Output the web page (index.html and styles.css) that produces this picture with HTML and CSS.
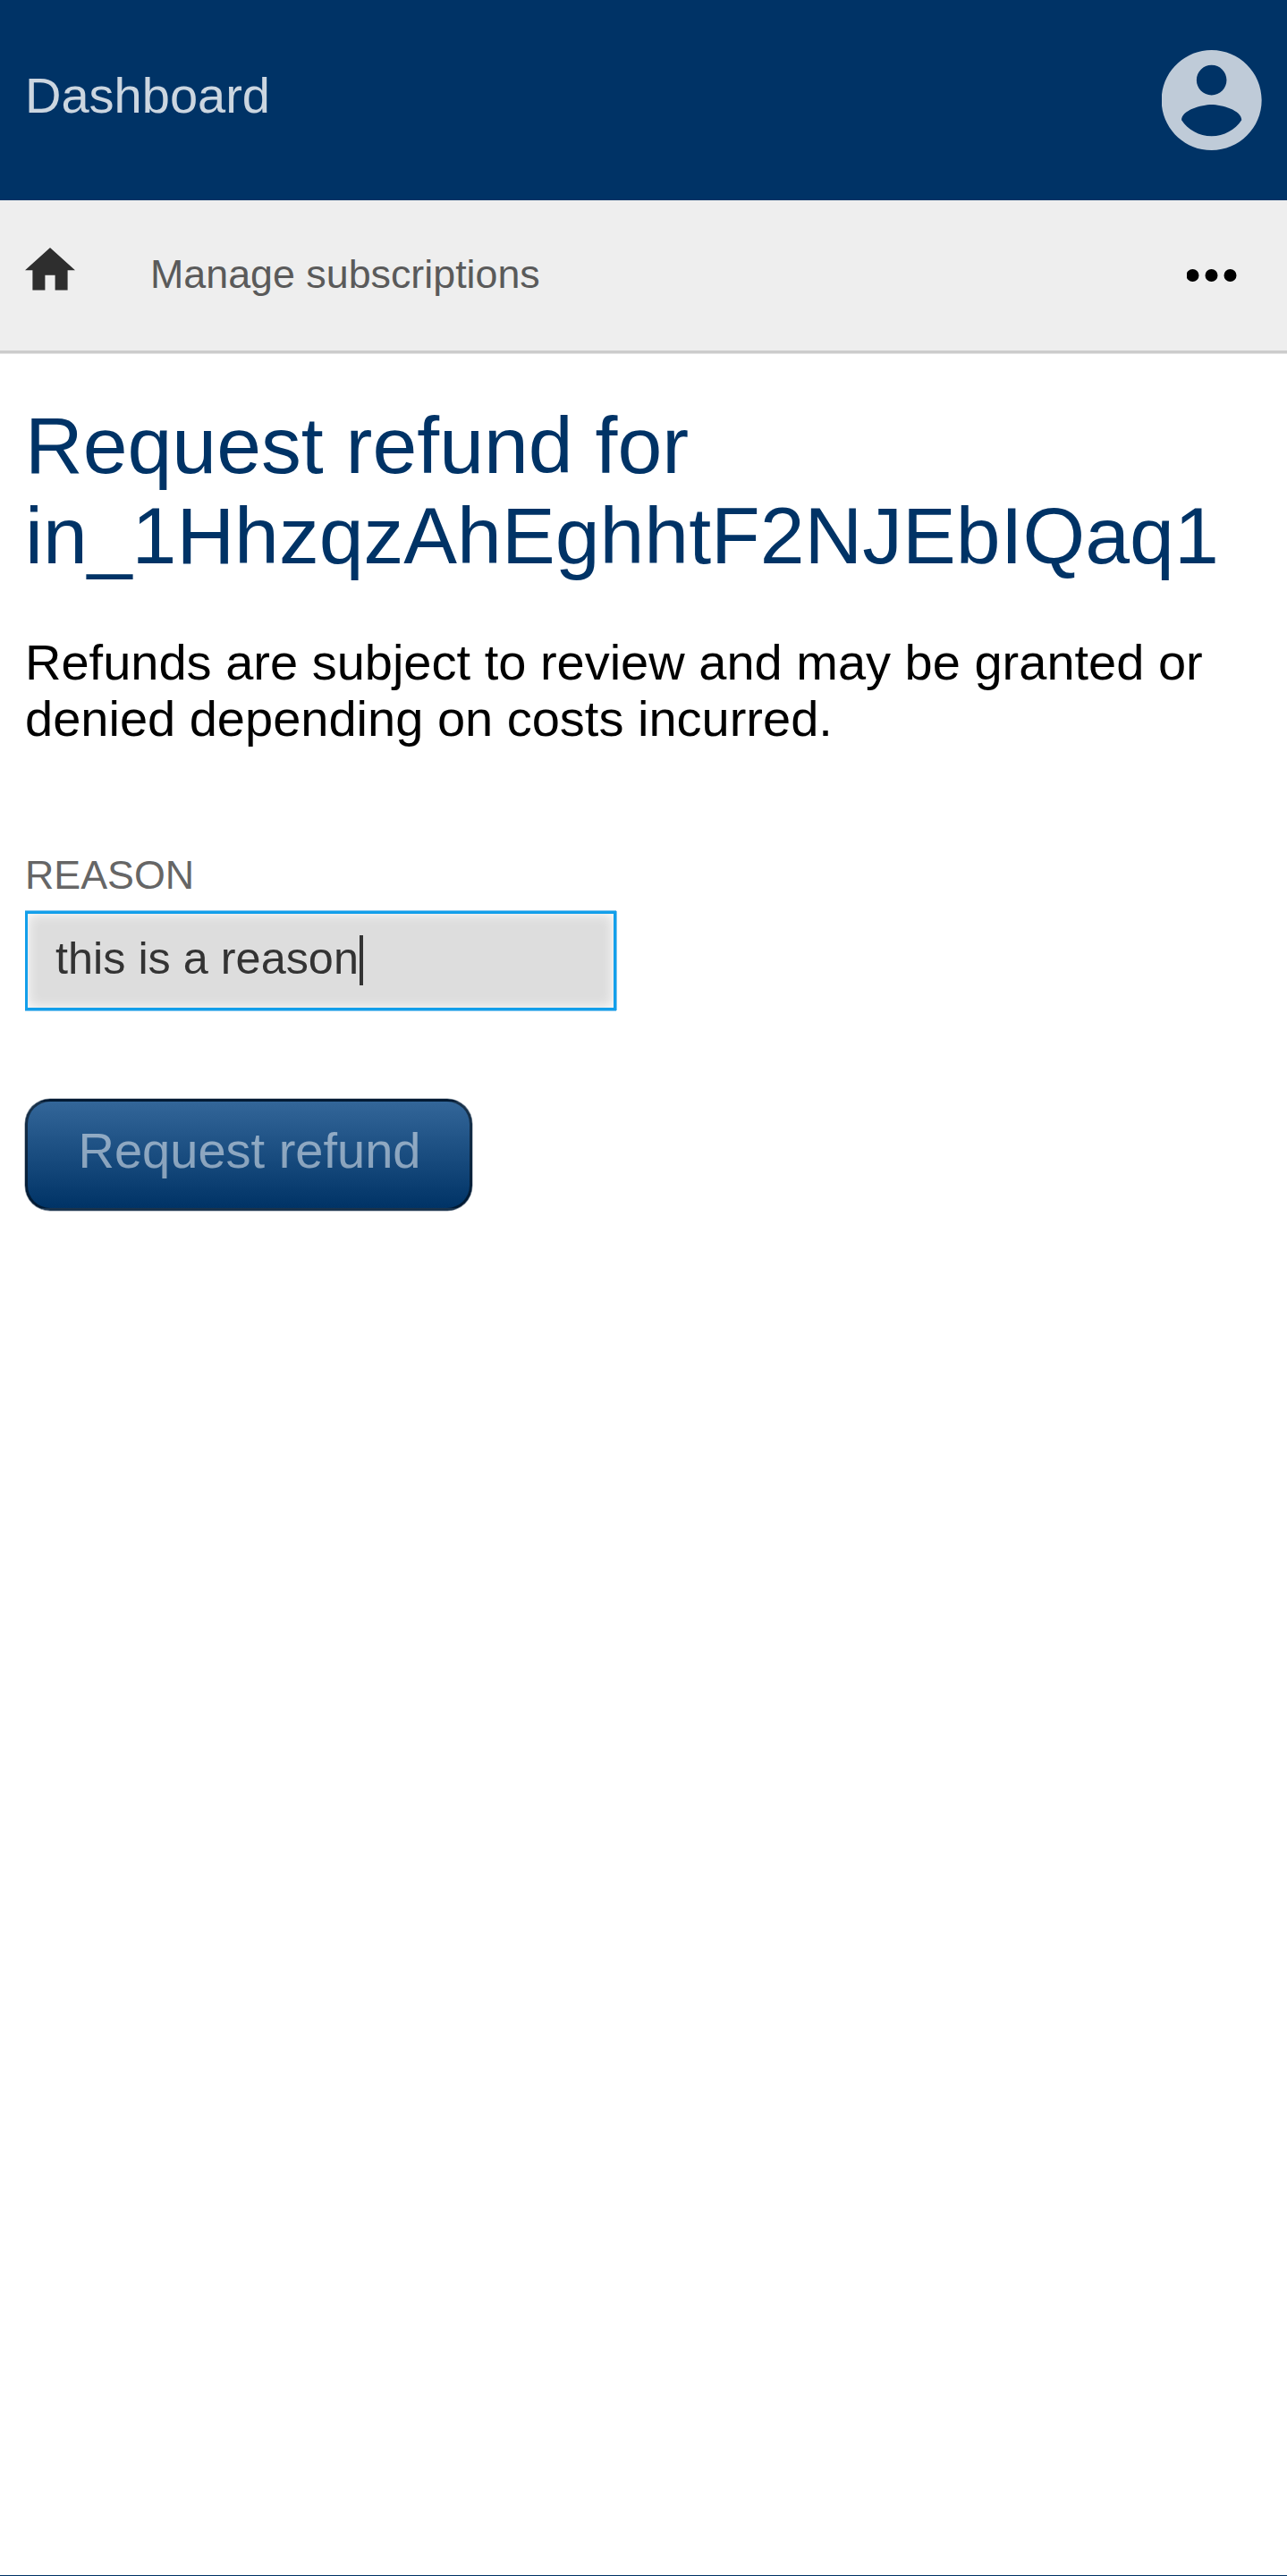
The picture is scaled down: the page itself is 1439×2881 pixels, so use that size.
FILE: index.html
```html
<!DOCTYPE html>
<html lang="en">
<head>
<meta charset="utf-8">
<title>Request refund</title>
<link rel="stylesheet" href="styles.css">
</head>
<body>
<header class="header">
  <a class="header-title">Dashboard</a>
  <svg class="account-icon" viewBox="2.06 2 20 20" role="img" aria-label="Account"><path d="M12 2C6.48 2 2 6.48 2 12s4.48 10 10 10 10-4.48 10-10S17.52 2 12 2zm0 3c1.66 0 3 1.34 3 3s-1.34 3-3 3-3-1.34-3-3 1.34-3 3-3zm0 14.2c-2.5 0-4.71-1.28-6-3.22.03-1.99 4-3.08 6-3.08 1.99 0 5.97 1.09 6 3.08-1.29 1.94-3.5 3.22-6 3.22z"/></svg>
</header>
<nav class="nav">
  <svg class="home-icon" viewBox="2 3 20 17" role="img" aria-label="Home"><path d="M10 20v-6h4v6h5v-8h3L12 3 2 12h3v8z"/></svg>
  <a class="nav-link">Manage subscriptions</a>
  <svg class="more-icon" viewBox="0.5 0 56 14" role="img" aria-label="More"><circle cx="7" cy="7" r="7"/><circle cx="28" cy="7" r="7"/><circle cx="49" cy="7" r="7"/></svg>
</nav>
<main class="content">
  <h1 class="title">Request refund for in_1HhzqzAhEghhtF2NJEbIQaq1</h1>
  <p class="notice">Refunds are subject to review and may be granted or denied depending on costs incurred.</p>
  <form class="form">
    <span class="label" id="reason-label">Reason</span>
    <div class="field" role="textbox" aria-labelledby="reason-label"><span>this is a reason</span><i class="caret"></i></div>
    <button class="submit" type="button">Request refund</button>
  </form>
</main>
<footer class="footer"></footer>
</body>
</html>
```
FILE: styles.css
```css
* {
  box-sizing: border-box;
}

body {
  margin: 0;
  height: 2881px;
  display: flex;
  flex-direction: column;
  background: #fff;
  font: 56px/63px "Liberation Sans", Arial, sans-serif;
  color: #000;
}

svg {
  display: block;
  flex: none;
}

.header {
  height: 224px;
  padding: 56px 28px;
  display: flex;
  justify-content: space-between;
  align-items: flex-start;
  background: #003366;
}

.header-title {
  margin-top: 19px;
  color: rgba(255, 255, 255, 0.8);
}

.account-icon {
  width: 112px;
  height: 112px;
  fill: rgba(255, 255, 255, 0.75);
}

.nav {
  height: 171px;
  padding: 53px 56px 0 28px;
  display: flex;
  align-items: flex-start;
  background: #eee;
  border-bottom: 3px solid #ccc;
  box-shadow: 0 1px #e5e5e5;
}

.home-icon {
  width: 56px;
  height: 47.6px;
  margin-top: 0.4px;
  fill: #2e2e2e;
}

.nav-link {
  margin: 4px 0 0 84px;
  font-size: 44.8px;
  line-height: 51px;
  color: #5a5a5a;
}

.more-icon {
  width: 56px;
  height: 14px;
  margin: 24px 0 0 auto;
}

.content {
  flex: 1;
  padding: 53px 28px 0;
}

.title {
  margin: 0;
  font-size: 89.6px;
  font-weight: 400;
  line-height: 101px;
  color: #003366;
}

.notice {
  margin: 59px 0 0;
}

.form {
  margin-top: 118px;
  display: flex;
  flex-direction: column;
  align-items: flex-start;
}

.label {
  font-size: 44.8px;
  line-height: 51px;
  text-transform: uppercase;
  color: #666;
}

.field {
  width: 661px;
  height: 111px;
  margin-top: 15px;
  padding: 21px 31px;
  display: flex;
  border: 3px solid #139fea;
  background: #ddd;
  box-shadow: inset 0 0 14px #fff, 0 -1px #7fc5ee, 0 1px #7fc5ee, 1px 0 #7fc5ee;
  font-size: 50.4px;
  line-height: 57px;
  color: #333;
}

.caret {
  width: 4px;
  height: 56px;
  margin: 3px 0 0 1.5px;
  background: #333;
}

.submit {
  width: 500px;
  height: 125px;
  margin-top: 99px;
  padding: 23px 0 0 56.5px;
  display: flex;
  align-items: flex-start;
  border: 3px solid rgba(0, 0, 0, 0.5);
  border-radius: 28px;
  background: linear-gradient(#336699, #003366);
  box-shadow: 0 0 0 0.5px rgba(0, 26, 51, 0.5);
  font: inherit;
  color: rgba(255, 255, 255, 0.5);
}

.footer {
  height: 1px;
  background: #003366;
}
```
